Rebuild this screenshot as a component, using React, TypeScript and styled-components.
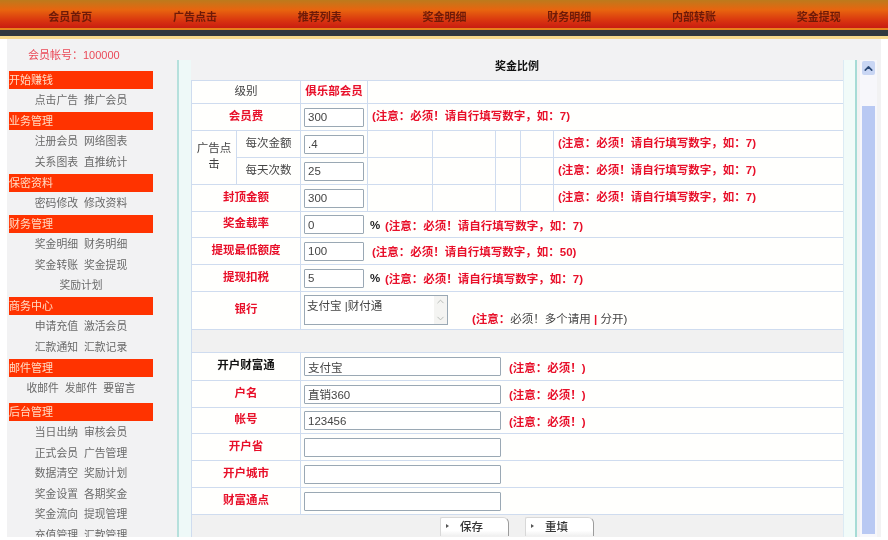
import React from "react";
import styled, { createGlobalStyle } from "styled-components";
import { ChevronUp, ChevronDown } from "lucide-react";

const GlobalStyle = createGlobalStyle`
  html, body {
    margin: 0;
    padding: 0;
    background: #fff;
  }
  body {
    font-family: "Liberation Sans", "Noto Sans CJK SC", sans-serif;
    font-size: 11.5px;
  }
`;

const Page = styled.div`
  width: 888px;
  height: 540px;
  overflow: hidden;
  background: #fff;
  filter: blur(0.5px);
`;

const TopNav = styled.nav`
  display: grid;
  grid-template-columns: repeat(7, 1fr);
  height: 28px;
  padding: 0 7px 0 8px;
  background: linear-gradient(#bd7a1c 0%, #e8650f 35%, #d8330f 75%, #c81c12 100%);
`;

const NavItem = styled.a`
  display: flex;
  align-items: center;
  justify-content: center;
  padding-top: 3px;
  color: #6e1a08;
  font-weight: 700;
  font-size: 11px;
`;

const NavBand = styled.div`
  height: 11px;
  box-sizing: border-box;
  background: #30383f;
  border-top: 2px solid #e8831c;
  border-bottom: 3px solid #f6d98c;
`;

const Shell = styled.div`
  display: flex;
  height: 498px;
  margin: 0 7px 0 7px;
  overflow: hidden;
  background: #f2f2f3;
`;

const Sidebar = styled.aside`
  flex: none;
  width: 144px;
  margin-left: 2px;
  padding-top: 6px;
`;

const Account = styled.div`
  height: 20px;
  margin-bottom: 6px;
  padding-left: 19px;
  line-height: 20px;
  color: #ea4a58;
  font-size: 11px;
`;

const Section = styled.section<{ $tail: number }>`
  margin-bottom: ${(p) => p.$tail}px;
`;

const SectionTitle = styled.h3`
  height: 18px;
  margin: 0;
  line-height: 18px;
  background: #ff3300;
  color: #ffdcc4;
  font-size: 11px;
  font-weight: 400;
`;

const LinkRow = styled.div`
  display: flex;
  justify-content: center;
  gap: 6px;
  height: 20.5px;
  line-height: 23px;
  color: #6a6a6a;
  font-size: 10.8px;
`;

const Main = styled.main`
  display: flex;
  flex: none;
  width: 698px;
  margin: 21px 0 0 23px;
`;

const LeftGutter = styled.div`
  flex: none;
  width: 12px;
  margin-left: 1px;
  background: #eef9f8;
  border-left: 2px solid #b6e0dc;
`;

const Content = styled.div`
  flex: none;
  width: 652px;
`;

const TitleBar = styled.div`
  display: flex;
  align-items: center;
  justify-content: center;
  height: 20px;
  padding-bottom: 10px;
  box-sizing: border-box;
  color: #111;
  font-weight: 700;
  font-size: 11px;
`;

const Table = styled.table`
  width: 652px;
  table-layout: fixed;
  border-collapse: collapse;
  background: #fffffd;
  td {
    box-sizing: border-box;
    padding: 0 3px;
    border: 1px solid #cfdcef;
  }
`;

const Label = styled.td<{ $tone?: "red" | "black" | "gray" }>`
  && {
    padding-bottom: 5px;
  }
  text-align: center;
  font-weight: ${(p) => (p.$tone === "gray" ? 400 : 700)};
  color: ${(p) =>
    p.$tone === "gray" ? "#444" : p.$tone === "black" ? "#111" : "#e8102a"};
`;

const NoteCell = styled.td`
  && {
    padding-bottom: 4px;
  }
`;

const GrayRow = styled.td`
  background: #f1f1f1;
`;

const Field = styled.input<{ $wide?: boolean }>`
  display: block;
  box-sizing: border-box;
  width: ${(p) => (p.$wide ? "197px" : "60px")};
  height: 19px;
  padding: 0 3px;
  border: 1px solid #9aa8b4;
  border-radius: 1px;
  background: #fff;
  color: #444;
  font-family: "Liberation Sans", "Noto Sans CJK SC", sans-serif;
  font-size: 11.5px;
  outline: none;
`;

const FieldLine = styled.div`
  display: flex;
  align-items: center;
`;

const Note = styled.span<{ $left: number }>`
  margin-left: ${(p) => p.$left}px;
  color: #e8102a;
  font-weight: 700;
  white-space: nowrap;
`;

const BankNote = styled(Note)`
  margin-bottom: 2px;
`;

const Percent = styled.span`
  margin-left: 6px;
  width: 13px;
  color: #222;
  font-weight: 700;
`;

const PlainNote = styled.span`
  color: #444;
  font-weight: 400;
`;

const BankLine = styled.div`
  display: flex;
  align-items: flex-end;
  height: 34px;
`;

const BankBox = styled.div`
  display: flex;
  flex: none;
  box-sizing: border-box;
  width: 144px;
  height: 30px;
  margin-bottom: 3px;
  border: 1px solid #9aa8b4;
  background: #fff;
`;

const BankText = styled.textarea`
  flex: 1;
  min-width: 0;
  padding: 1px 2px;
  border: 0;
  resize: none;
  overflow: hidden;
  background: transparent;
  color: #444;
  font-family: "Liberation Sans", "Noto Sans CJK SC", sans-serif;
  font-size: 11.5px;
  outline: none;
`;

const BankScroll = styled.div`
  display: flex;
  flex: none;
  flex-direction: column;
  align-items: center;
  justify-content: space-between;
  width: 13px;
  background: #f4f4f2;
  color: #b4b8b4;
`;

const ButtonCell = styled.td`
  background: #f1f1f1;
`;

const ButtonBar = styled.div`
  display: flex;
  gap: 16px;
  margin-left: 245px;
  padding-top: 1px;
`;

const ActionButton = styled.button`
  display: flex;
  align-items: center;
  box-sizing: border-box;
  width: 69px;
  height: 19px;
  padding: 0 0 2px 5px;
  border: 1px solid #d8d8d8;
  border-right-color: #9c9c9c;
  border-bottom: 0;
  border-radius: 2px 6px 0 0;
  background: linear-gradient(#fff 70%, #f0f0f0);
  color: #333;
  font-family: "Liberation Sans", "Noto Sans CJK SC", sans-serif;
  font-size: 11.5px;
  font-weight: 500;
`;

const ButtonArrow = styled.i`
  width: 0;
  height: 0;
  margin-right: 11px;
  border-left: 3px solid #555;
  border-top: 2px solid transparent;
  border-bottom: 2px solid transparent;
`;

const RightGutter = styled.div`
  flex: none;
  box-sizing: border-box;
  width: 14px;
  background: #f1fbf9;
  border-left: 1px solid #dcebf4;
  border-right: 2px solid #a6dcd6;
`;

const ScrollBar = styled.div`
  display: flex;
  flex: none;
  flex-direction: column;
  width: 17px;
  margin-left: 3px;
  padding: 1px 2px 3px;
  box-sizing: border-box;
  background: #f7f7fb;
`;

const ScrollUp = styled.div`
  display: flex;
  align-items: center;
  justify-content: center;
  height: 14px;
  border-radius: 2px;
  background: #c9d6f4;
  color: #2c4a78;
`;

const ScrollThumb = styled.div`
  flex: 1;
  margin-top: 31px;
  background: #b9c9f3;
`;

const navItems = ["会员首页", "广告点击", "推荐列表", "奖金明细", "财务明细", "内部转账", "奖金提现"];

const menu = [
  { title: "开始赚钱", tail: 2.5, rows: [["点击广告", "推广会员"]] },
  { title: "业务管理", tail: 3, rows: [["注册会员", "网络图表"], ["关系图表", "直推统计"]] },
  { title: "保密资料", tail: 2.5, rows: [["密码修改", "修改资料"]] },
  { title: "财务管理", tail: 2.5, rows: [["奖金明细", "财务明细"], ["奖金转账", "奖金提现"], ["奖励计划"]] },
  { title: "商务中心", tail: 3, rows: [["申请充值", "激活会员"], ["汇款通知", "汇款记录"]] },
  { title: "邮件管理", tail: 5.5, rows: [["收邮件", "发邮件", "要留言"]] },
  {
    title: "后台管理",
    tail: 0,
    rows: [
      ["当日出纳", "审核会员"],
      ["正式会员", "广告管理"],
      ["数据清空", "奖励计划"],
      ["奖金设置", "各期奖金"],
      ["奖金流向", "提现管理"],
      ["充值管理", "汇款管理"],
    ],
  },
];

const NOTE = "(注意：必须！请自行填写数字，如：7)";
const MUST = "(注意：必须！)";
const colWidths = [45, 64, 67, 65, 63, 25, 33, 290];

function EmptyCells() {
  return (
    <>
      <td />
      <td />
      <td />
      <td />
    </>
  );
}

function WideRow({ label, value, must, tone, h }: { label: string; value: string; must?: boolean; tone?: "black"; h: number }) {
  return (
    <tr style={{ height: h }}>
      <Label colSpan={2} $tone={tone}>{label}</Label>
      <td colSpan={6}>
        <FieldLine>
          <Field $wide defaultValue={value} />
          {must ? <Note $left={8}>{MUST}</Note> : null}
        </FieldLine>
      </td>
    </tr>
  );
}

export default function App() {
  return (
    <Page>
      <GlobalStyle />
      <TopNav>
        {navItems.map((n) => (
          <NavItem key={n}>{n}</NavItem>
        ))}
      </TopNav>
      <NavBand />
      <Shell>
        <Sidebar>
          <Account>会员帐号：100000</Account>
          {menu.map((s) => (
            <Section key={s.title} $tail={s.tail}>
              <SectionTitle>{s.title}</SectionTitle>
              {s.rows.map((r) => (
                <LinkRow key={r[0]}>
                  {r.map((t) => (
                    <span key={t}>{t}</span>
                  ))}
                </LinkRow>
              ))}
            </Section>
          ))}
        </Sidebar>
        <Main>
          <LeftGutter />
          <Content>
            <TitleBar>奖金比例</TitleBar>
            <Table>
              <colgroup>
                {colWidths.map((w, i) => (
                  <col key={i} style={{ width: w }} />
                ))}
              </colgroup>
              <tbody>
                <tr style={{ height: 23 }}>
                  <Label colSpan={2} $tone="gray">级别</Label>
                  <Label>俱乐部会员</Label>
                  <td colSpan={5} />
                </tr>
                <tr style={{ height: 27 }}>
                  <Label colSpan={2}>会员费</Label>
                  <td><Field defaultValue="300" /></td>
                  <NoteCell colSpan={5}><Note $left={1}>{NOTE}</Note></NoteCell>
                </tr>
                <tr style={{ height: 27 }}>
                  <Label rowSpan={2} $tone="gray">广告点击</Label>
                  <Label $tone="gray">每次金额</Label>
                  <td><Field defaultValue=".4" /></td>
                  <EmptyCells />
                  <NoteCell><Note $left={1}>{NOTE}</Note></NoteCell>
                </tr>
                <tr style={{ height: 27 }}>
                  <Label $tone="gray">每天次数</Label>
                  <td><Field defaultValue="25" /></td>
                  <EmptyCells />
                  <NoteCell><Note $left={1}>{NOTE}</Note></NoteCell>
                </tr>
                <tr style={{ height: 27 }}>
                  <Label colSpan={2}>封顶金额</Label>
                  <td><Field defaultValue="300" /></td>
                  <EmptyCells />
                  <NoteCell><Note $left={1}>{NOTE}</Note></NoteCell>
                </tr>
                <tr style={{ height: 26 }}>
                  <Label colSpan={2}>奖金载率</Label>
                  <td colSpan={6}>
                    <FieldLine>
                      <Field defaultValue="0" />
                      <Percent>%</Percent>
                      <Note $left={2}>{NOTE}</Note>
                    </FieldLine>
                  </td>
                </tr>
                <tr style={{ height: 27 }}>
                  <Label colSpan={2}>提现最低额度</Label>
                  <td colSpan={6}>
                    <FieldLine>
                      <Field defaultValue="100" />
                      <Note $left={8}>{NOTE.replace("7", "50")}</Note>
                    </FieldLine>
                  </td>
                </tr>
                <tr style={{ height: 27 }}>
                  <Label colSpan={2}>提现扣税</Label>
                  <td colSpan={6}>
                    <FieldLine>
                      <Field defaultValue="5" />
                      <Percent>%</Percent>
                      <Note $left={2}>{NOTE}</Note>
                    </FieldLine>
                  </td>
                </tr>
                <tr style={{ height: 38 }}>
                  <Label colSpan={2}>银行</Label>
                  <td colSpan={6}>
                    <BankLine>
                      <BankBox>
                        <BankText defaultValue="支付宝 |财付通" />
                        <BankScroll>
                          <ChevronUp size={11} />
                          <ChevronDown size={11} />
                        </BankScroll>
                      </BankBox>
                      <BankNote $left={24}>
                        (注意：<PlainNote>必须！多个请用</PlainNote> | <PlainNote>分开)</PlainNote>
                      </BankNote>
                    </BankLine>
                  </td>
                </tr>
                <tr style={{ height: 23 }}>
                  <GrayRow colSpan={8} />
                </tr>
                <WideRow label="开户财富通" value="支付宝" must tone="black" h={28} />
                <WideRow label="户名" value="直销360" must h={27} />
                <WideRow label="帐号" value="123456" must h={26} />
                <WideRow label="开户省" value="" h={27} />
                <WideRow label="开户城市" value="" h={27} />
                <WideRow label="财富通点" value="" h={27} />
                <tr style={{ height: 23 }}>
                  <ButtonCell colSpan={8}>
                    <ButtonBar>
                      <ActionButton><ButtonArrow />保存</ActionButton>
                      <ActionButton><ButtonArrow />重填</ActionButton>
                    </ButtonBar>
                  </ButtonCell>
                </tr>
              </tbody>
            </Table>
          </Content>
          <RightGutter />
          <ScrollBar>
            <ScrollUp><ChevronUp size={13} strokeWidth={3} /></ScrollUp>
            <ScrollThumb />
          </ScrollBar>
        </Main>
      </Shell>
    </Page>
  );
}
